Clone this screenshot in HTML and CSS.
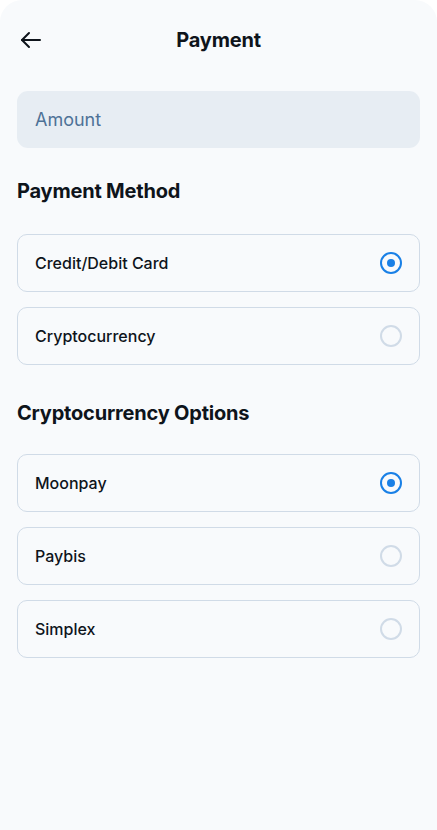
FILE: index.html
```html
<!DOCTYPE html>
<html>
<head>
<meta charset="utf-8">
<link rel="stylesheet" href="styles.css">
</head>
<body>
<div class="screen">
  <header class="topbar">
    <button class="back" aria-label="Back">
      <svg width="24" height="24" viewBox="0 0 24 24" fill="none" stroke="#0e141b" stroke-width="2" stroke-linecap="round" stroke-linejoin="round"><path d="M21 12H3"/><path d="M10 5l-7 7 7 7"/></svg>
    </button>
    <h1 class="title">Payment</h1>
    <span class="spacer"></span>
  </header>

  <div class="amount">Amount</div>

  <h2 class="section">Payment Method</h2>
  <div class="options">
    <label class="option"><span class="label">Credit/Debit Card</span><span class="radio checked"></span></label>
    <label class="option"><span class="label">Cryptocurrency</span><span class="radio"></span></label>
  </div>

  <h2 class="section second">Cryptocurrency Options</h2>
  <div class="options">
    <label class="option"><span class="label">Moonpay</span><span class="radio checked"></span></label>
    <label class="option"><span class="label">Paybis</span><span class="radio"></span></label>
    <label class="option"><span class="label">Simplex</span><span class="radio"></span></label>
  </div>
</div>
</body>
</html>
```
FILE: styles.css
```css
* { box-sizing: border-box; }
html, body { margin: 0; padding: 0; background: #ffffff; }
body { font-family: Inter, "Noto Sans", sans-serif; color: #0e141b; }
.screen {
  width: 437px;
  min-height: 830px;
  background: #f8fafc;
  border-radius: 22px 22px 0 0;
  padding: 0 17px;
  display: flex;
  flex-direction: column;
}
.topbar {
  height: 80px;
  display: flex;
  align-items: center;
  justify-content: space-between;
}
.back {
  width: 28px; height: 28px;
  border: 0; background: none; padding: 0;
  display: flex; align-items: center; justify-content: center;
  margin-left: 0;
}
.title {
  margin: 0;
  font-size: 20px;
  font-weight: 700;
  letter-spacing: -0.2px;
}
.spacer { width: 28px; }
.amount {
  margin-top: 11px;
  height: 57px;
  border-radius: 11px;
  background: #e7edf3;
  color: #4e7297;
  font-size: 18px;
  display: flex;
  align-items: center;
  padding-left: 18px;
}
.section {
  margin: 29px 0 29px;
  font-size: 20px;
  font-weight: 700;
  line-height: 28px;
  letter-spacing: -0.2px;
}
.section.second { margin-top: 34px; margin-bottom: 27px; }
.options { display: flex; flex-direction: column; gap: 15px; }
.option {
  height: 58px;
  border: 1px solid #d0dbe7;
  border-radius: 10px;
  display: flex;
  align-items: center;
  justify-content: space-between;
  padding: 0 17px 0 17px;
}
.label { font-size: 16px; font-weight: 500; color: #0e141b; }
.radio {
  width: 22px; height: 22px;
  border-radius: 50%;
  border: 2px solid #d0dbe7;
  position: relative;
}
.radio.checked { border: 2.5px solid #1980e6; }
.radio.checked::after {
  content: "";
  position: absolute;
  left: 50%; top: 50%;
  width: 8px; height: 8px;
  margin: -4px 0 0 -4px;
  border-radius: 50%;
  background: #1980e6;
}
```
